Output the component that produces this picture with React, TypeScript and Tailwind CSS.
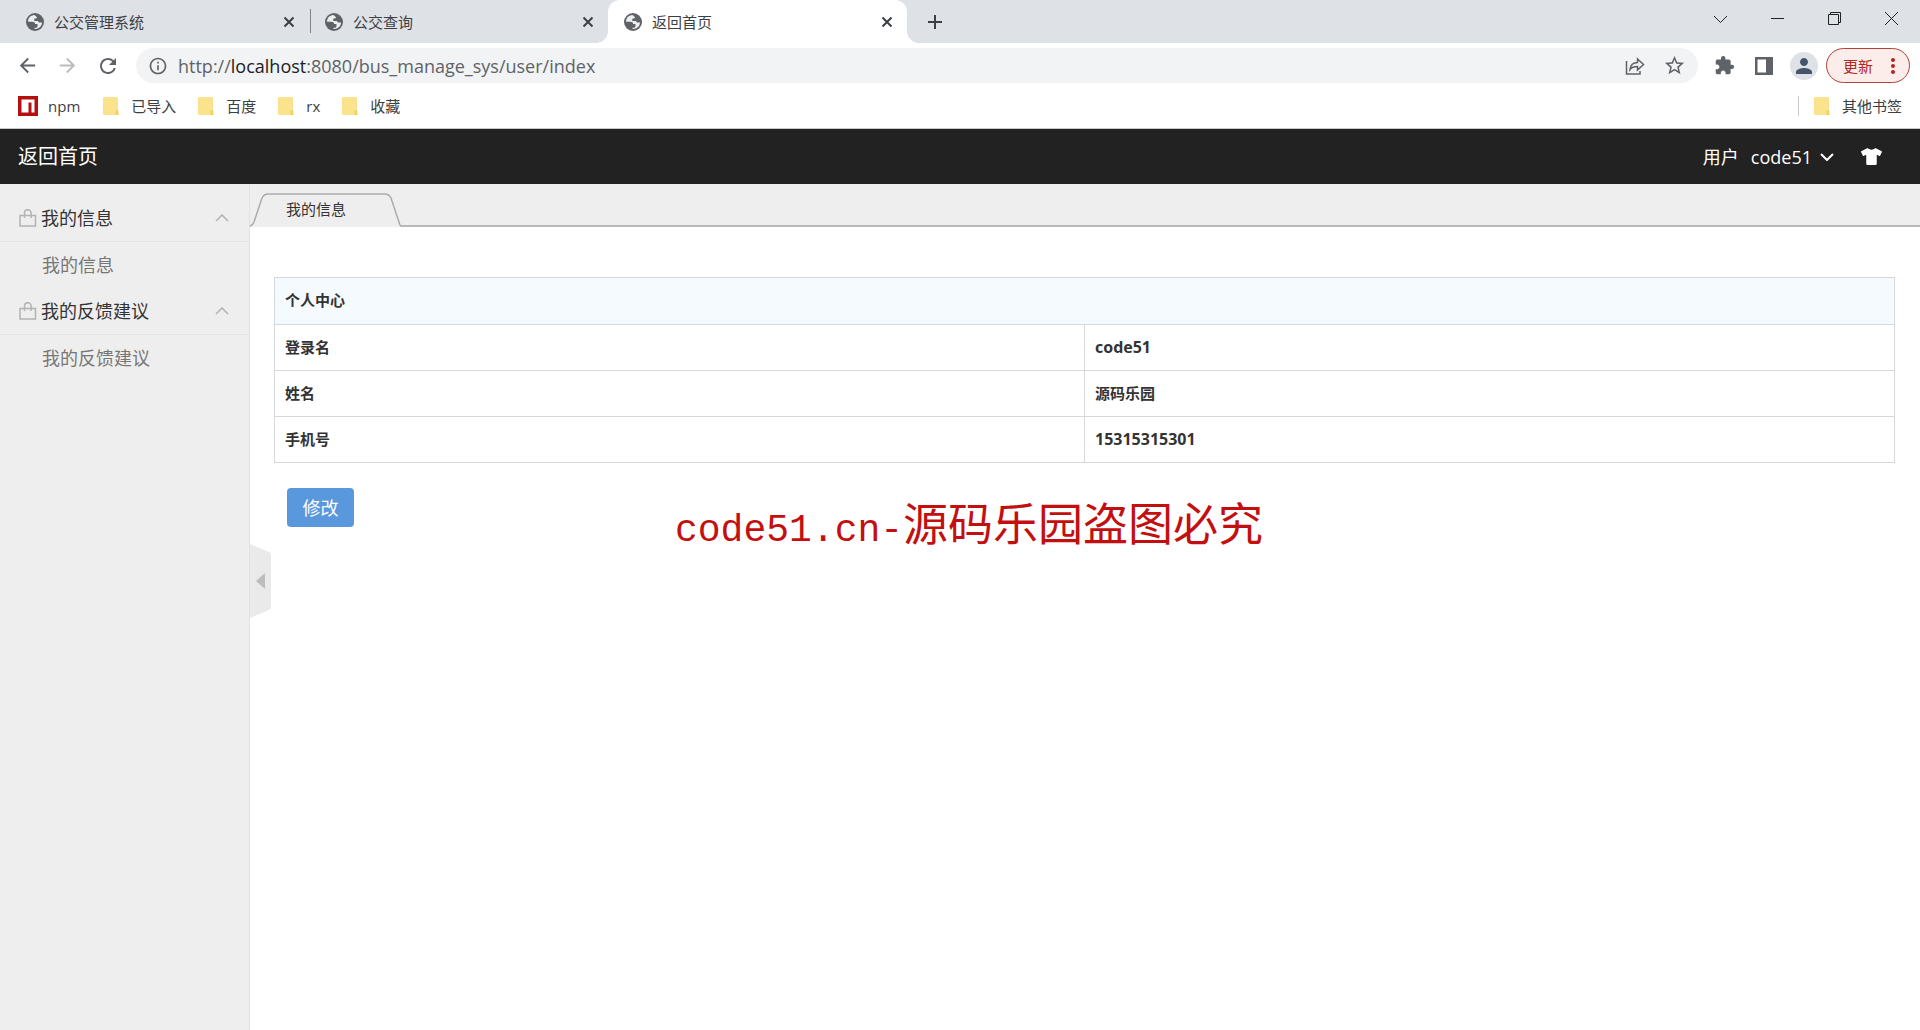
import type { ReactNode } from 'react'
import clsx from 'clsx'
import {
	MdArrowBack,
	MdArrowForward,
	MdExtension,
	MdInfoOutline,
	MdMoreVert,
	MdPerson,
	MdRefresh,
	MdStarBorder,
} from 'react-icons/md'
import { FaTshirt } from 'react-icons/fa'

const browserTabs = [
	{ title: '公交管理系统', active: false },
	{ title: '公交查询', active: false },
	{ title: '返回首页', active: true },
]

const menus = [
	{ title: '我的信息', items: ['我的信息'] },
	{ title: '我的反馈建议', items: ['我的反馈建议'] },
]

const profile = [
	{ label: '登录名', value: 'code51', latin: true },
	{ label: '姓名', value: '源码乐园', latin: false },
	{ label: '手机号', value: '15315315301', latin: true },
]

export default function App() {
	return (
		<div className="flex min-h-screen flex-col bg-white font-['Open_Sans','Noto_Sans_CJK_SC',sans-serif] text-[#333]">
			<TabStrip />
			<Toolbar />
			<Bookmarks />
			<SiteHeader />
			<div className="flex flex-1">
				<Sidebar />
				<Content />
			</div>
		</div>
	)
}

function TabStrip() {
	return (
		<div className="flex h-[43px] bg-[#dee1e6]">
			<div className="flex pl-[10px]">
				{browserTabs.map((tab, i) => (
					<div
						key={tab.title}
						className={clsx(
							'relative flex w-[299px] items-center pr-[14px] pl-4',
							tab.active && 'rounded-t-xl bg-white'
						)}
					>
						<GlobeIcon />
						<span className="ml-[10px] flex-1 text-[15px] leading-5 text-[#3c4043]">
							{tab.title}
						</span>
						<button aria-label="关闭标签页" className="text-[#3c4043]">
							<svg
								viewBox="0 0 12 12"
								className="size-3 fill-none stroke-current stroke-2"
							>
								<path d="M1.500 1.500l9 9M10.500 1.500l-9 9" />
							</svg>
						</button>
						{i === 0 && (
							<span className="absolute top-[9px] right-[-2px] h-6 w-px bg-[#80868b]" />
						)}
						{tab.active && (
							<>
								<span className="absolute bottom-0 -left-3 size-3 bg-[radial-gradient(circle_at_0_0,#dee1e6_12px,#fff_12px)]" />
								<span className="absolute -right-3 bottom-0 size-3 bg-[radial-gradient(circle_at_100%_0,#dee1e6_12px,#fff_12px)]" />
							</>
						)}
					</div>
				))}
			</div>
			<button aria-label="新标签页" className="ml-5 text-[#3c4043]">
				<svg
					viewBox="0 0 16 16"
					className="size-4 fill-none stroke-current stroke-2"
				>
					<path d="M1 8h14M8 1v14" />
				</svg>
			</button>
			<div className="ml-auto flex h-[37px] text-[#222]">
				<WindowButton label="搜索标签页">
					<path d="M0 4l6.500 6.500L13 4" />
				</WindowButton>
				<WindowButton label="最小化">
					<path d="M0 6.500h13" />
				</WindowButton>
				<WindowButton label="还原">
					<path d="M.5 2.500h10v10H.5zM2.500 2.500v-2h10v10h-2" />
				</WindowButton>
				<WindowButton label="关闭">
					<path d="M0 0l13 13M13 0L0 13" />
				</WindowButton>
			</div>
		</div>
	)
}

function GlobeIcon() {
	return (
		<svg viewBox="0 0 18 18" className="size-[18px]">
			<circle cx="9" cy="9" r="9" fill="#5f6368" />
			<path
				d="M8.500 2C4.500 2.300 2 5 2 8.800h4.500c1.500 0 2.500.8 2.700 2.200h2.300v2.300c0 .9-.8 1.500-1.800 1.500H8.500V16c4.500.2 7.500-3 7.500-6.500h-2.300c-1 0-1.500-.5-1.500-1.500H8.300V5.500h1.500c.8 0 1.200-.5 1.200-1.200z"
				fill="#eceef0"
			/>
		</svg>
	)
}

function WindowButton({
	label,
	children,
}: {
	label: string
	children: ReactNode
}) {
	return (
		<button
			aria-label={label}
			className="flex w-[57px] items-center justify-center"
		>
			<svg
				viewBox="0 0 13 13"
				className="size-[13px] overflow-visible fill-none stroke-current"
			>
				{children}
			</svg>
		</button>
	)
}

function Toolbar() {
	return (
		<div className="flex h-[45px] items-center pr-2.5 pl-4 text-[#5f6368]">
			<button aria-label="后退">
				<MdArrowBack className="size-[23px]" />
			</button>
			<button aria-label="前进" className="ml-[17px] text-[#babcbe]">
				<MdArrowForward className="size-[23px]" />
			</button>
			<button aria-label="刷新" className="ml-[17px]">
				<MdRefresh className="size-6" />
			</button>
			<div className="ml-4 flex h-[35px] flex-1 items-center rounded-full bg-[#f1f3f4] px-3">
				<MdInfoOutline className="size-5" />
				<a href="#" className="ml-2.5 text-lg leading-6">
					http://<span className="text-[#202124]">localhost</span>
					:8080/bus_manage_sys/user/index
				</a>
				<button aria-label="分享" className="ml-auto">
					<svg
						viewBox="0 0 20 20"
						className="size-5 fill-none stroke-current stroke-[1.500]"
					>
						<path d="M1.500 5v13h13.500v-3" />
						<path d="M5 13.500C5.500 9 8 6.500 12.500 6.500V3l6 5.500-6 5.500v-3.500c-3.500 0-6 1-7.500 3z" />
					</svg>
				</button>
				<button aria-label="收藏" className="ml-[18px]">
					<MdStarBorder className="size-[23px]" />
				</button>
			</div>
			<button aria-label="扩展程序" className="ml-4">
				<MdExtension className="size-[21px]" />
			</button>
			<button aria-label="侧边栏" className="ml-5">
				<svg viewBox="0 0 18 18" className="size-[18px] fill-current">
					<path d="M0 0h18v18H0zM2.500 2.500v13H11v-13z" fillRule="evenodd" />
				</svg>
			</button>
			<button
				aria-label="用户"
				className="ml-[17px] flex size-7 items-center justify-center rounded-full bg-[#dee1e6] text-[#46546b]"
			>
				<MdPerson className="size-6" />
			</button>
			<button className="ml-2 flex h-[35px] items-center rounded-full border border-[#b3403a] bg-[#fcecea] pr-1 pl-4 text-[15px] leading-5 text-[#b3261e]">
				更新
				<MdMoreVert className="ml-2 size-6" />
			</button>
		</div>
	)
}

function Bookmarks() {
	return (
		<div className="flex h-[41px] items-center border-b border-[#c8c8c8] pr-[18px] pb-1 pl-[18px] text-[15px] leading-5 text-[#3c4043]">
			<a href="#" className="flex items-center gap-2.5">
				<svg viewBox="0 0 20 20" className="size-5">
					<path fill="#b5100f" d="M0 0h20v20H0z" />
					<path fill="#fff" d="M3.500 3.500h13v13h-3v-10h-3v10h-7z" />
				</svg>
				npm
			</a>
			<div className="ml-[23px] flex gap-[22px]">
				<Folder>已导入</Folder>
				<Folder>百度</Folder>
				<Folder>rx</Folder>
				<Folder>收藏</Folder>
			</div>
			<div className="ml-auto border-l border-[#c6c9cd] pl-[15px]">
				<Folder>其他书签</Folder>
			</div>
		</div>
	)
}

function Folder({ children }: { children: ReactNode }) {
	return (
		<a href="#" className="flex items-center gap-3">
			<svg viewBox="0 0 16 20" className="h-5 w-4">
				<rect width="15" height="18" y="1" rx="1" fill="#fbe38e" />
				<path d="M12.500 19v-3.500a1.500 1.500 0 0 1 3 0V19z" fill="#f3d25f" />
			</svg>
			{children}
		</a>
	)
}

function SiteHeader() {
	return (
		<header className="flex h-[55px] items-center justify-between bg-[#222] pr-[38px] pl-[18px] text-white">
			<a href="#" className="text-xl">
				返回首页
			</a>
			<div className="flex items-center text-lg">
				<span>用户</span>
				<button className="ml-3 flex items-center gap-2">
					code51
					<svg
						viewBox="0 0 14 8"
						className="h-2 w-[14px] fill-none stroke-current stroke-2"
					>
						<path d="M1 1l6 6 6-6" />
					</svg>
				</button>
				<button aria-label="换肤" className="ml-[27px]">
					<FaTshirt className="size-[21px]" />
				</button>
			</div>
		</header>
	)
}

function Sidebar() {
	return (
		<nav className="w-[250px] shrink-0 border-r border-[#e2e2e2] bg-[#eee] pt-[11px] text-lg">
			{menus.map((menu) => (
				<div key={menu.title}>
					<button className="flex h-[47px] w-full items-center border-b border-[#e3e3e3] pr-5 pl-[19px]">
						<svg
							viewBox="0 0 18 18"
							className="size-[18px] fill-none stroke-[#b3b3b3] stroke-[1.500]"
						>
							<path d="M1 6.500h15.500v10.500h-15.500zM5.500 9V4a3.300 3.300 0 0 1 6.600 0V9" />
						</svg>
						<span className="ml-1">{menu.title}</span>
						<svg
							viewBox="0 0 14 8"
							className="ml-auto h-2 w-[14px] fill-none stroke-[#b3b3b3] stroke-[1.500]"
						>
							<path d="M1 7l6-6 6 6" />
						</svg>
					</button>
					{menu.items.map((item) => (
						<a
							key={item}
							href="#"
							className="flex h-[46px] items-center pl-[42px] text-[#777]"
						>
							{item}
						</a>
					))}
				</div>
			))}
		</nav>
	)
}

function Content() {
	return (
		<main className="relative flex-1">
			<div className="flex h-[43px] items-end border-b-2 border-[#b8b8b8] bg-[#eee]">
				<button className="relative -mb-0.5 h-[34px] w-[151px] pb-0.5 pl-9 text-left text-[15px]">
					<svg viewBox="0 0 151 34" className="absolute inset-0 h-full w-full">
						<path
							d="M0 33Q2 33 4 29L12 5Q14 1 18 1H135Q139 1 141 5L149 29Q150 33 151 34H0z"
							fill="#eee"
						/>
						<path
							d="M0 33Q2 33 4 29L12 5Q14 1 18 1H135Q139 1 141 5L149 29Q150 33 151 33"
							fill="none"
							stroke="#a9acaf"
							strokeWidth="1.500"
						/>
					</svg>
					<span className="relative">我的信息</span>
				</button>
			</div>

			<div className="pt-[50px] pr-[25px] pl-6">
				<table className="w-full table-fixed border-collapse text-left text-[15px] leading-5 font-bold">
					<thead>
						<tr className="h-[47px] bg-[#f5faff]">
							<th
								colSpan={2}
								className="border border-[#d5d8dc] px-[10px] pb-0.5"
							>
								个人中心
							</th>
						</tr>
					</thead>
					<tbody>
						{profile.map((row) => (
							<tr key={row.label} className="h-[46px]">
								<th className="border border-[#d5d8dc] px-[10px] pb-0.5">
									{row.label}
								</th>
								<td
									className={clsx(
										'border border-[#d5d8dc] px-[10px] pb-0.5',
										row.latin && 'text-base leading-5'
									)}
								>
									{row.value}
								</td>
							</tr>
						))}
					</tbody>
				</table>
				<button className="mt-[25px] ml-[13px] flex h-[39px] w-[67px] items-center justify-center rounded bg-[#5a98de] text-lg text-white">
					修改
				</button>
			</div>

			<button
				aria-label="收起菜单"
				className="absolute top-[360px] left-0 h-[74px] w-[21px]"
			>
				<svg viewBox="0 0 21 74" className="h-full w-full">
					<path d="M0 0L19 8Q21 9 21 12V62Q21 65 19 66L0 74z" fill="#eaeaea" />
					<path d="M6 37L15 29V45z" fill="#bdbdbd" />
				</svg>
			</button>

			<p className="absolute top-[316px] left-[425px] font-['Liberation_Mono','Noto_Sans_CJK_SC',monospace] text-[38px] leading-[60px] whitespace-nowrap text-[#c40f10]">
				code51.cn-<span className="text-[45px]">源码乐园盗图必究</span>
			</p>
		</main>
	)
}
